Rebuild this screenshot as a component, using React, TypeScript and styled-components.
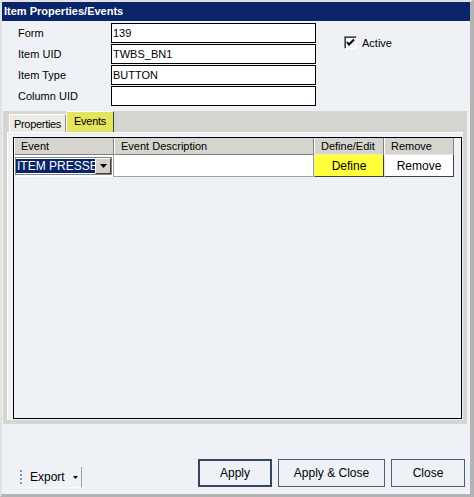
import React from 'react';
import styled, { createGlobalStyle } from 'styled-components';

const GlobalStyle = createGlobalStyle`
  html, body {
    margin: 0;
    padding: 0;
    background: #ffffff;
  }
  body {
    font-family: "Liberation Sans", Arial, sans-serif;
    font-size: 11px;
    color: #000;
  }
  * {
    box-sizing: border-box;
  }
`;

const fields = [
  { label: 'Form', value: '139' },
  { label: 'Item UID', value: 'TWBS_BN1' },
  { label: 'Item Type', value: 'BUTTON' },
  { label: 'Column UID', value: '' },
];

function App() {
  return (
    <>
      <GlobalStyle />
      <Window>
        <TitleBar>Item Properties/Events</TitleBar>
        <Header>
          <Fields>
            {fields.map((f) => (
              <React.Fragment key={f.label}>
                <Label>{f.label}</Label>
                <TextBox>{f.value}</TextBox>
              </React.Fragment>
            ))}
          </Fields>
          <ActiveOption>
            <CheckBox>
              <svg width="9" height="9" viewBox="0 0 9 9">
                <path d="M1 4 L3 6.5 L8 1.5" stroke="#000" strokeWidth="2" fill="none" />
              </svg>
            </CheckBox>
            Active
          </ActiveOption>
        </Header>

        <TabControl>
          <TabStrip>
            <Tab $width={57}>Properties</Tab>
            <Tab $active $width={48}>Events</Tab>
          </TabStrip>
          <TabPage>
            <Grid>
              <GridRow $header>
                <HeaderCell>Event</HeaderCell>
                <HeaderCell>Event Description</HeaderCell>
                <HeaderCell>Define/Edit</HeaderCell>
                <HeaderCell>Remove</HeaderCell>
              </GridRow>
              <GridRow>
                <ComboCell>
                  <Combo>
                    <ComboText>
                      <span>ITEM PRESSED</span>
                    </ComboText>
                    <ComboButton>
                      <svg width="7" height="4" viewBox="0 0 7 4">
                        <path d="M0 0 H7 L3.5 4 Z" fill="#000" />
                      </svg>
                    </ComboButton>
                  </Combo>
                </ComboCell>
                <TextCell />
                <CellButton $highlight>Define</CellButton>
                <CellButton>Remove</CellButton>
              </GridRow>
            </Grid>
          </TabPage>
        </TabControl>

        <Footer>
          <ExportMenu>
            <Grip>
              <span />
              <span />
              <span />
              <span />
            </Grip>
            <ExportLabel>Export</ExportLabel>
            <svg width="5" height="3" viewBox="0 0 5 3">
              <path d="M0 0 H5 L2.5 3 Z" fill="#000" />
            </svg>
          </ExportMenu>
          <Buttons>
            <Button $default $width={74}>Apply</Button>
            <Button $width={107}>Apply &amp; Close</Button>
            <Button $width={74}>Close</Button>
          </Buttons>
        </Footer>
      </Window>
    </>
  );
}

const Window = styled.div`
  width: 474px;
  height: 497px;
  display: flex;
  flex-direction: column;
  background: #eef2f6;
  border-top: 2px solid #e2e2e2;
  border-left: 2px solid #e2e2e2;
  border-right: 4px solid #b4b4b4;
  border-bottom: 3px solid #b4b4b4;
`;

const TitleBar = styled.div`
  height: 19px;
  line-height: 19px;
  padding-left: 2px;
  background: #0a246a;
  color: #ffffff;
  font-weight: bold;
  font-size: 11px;
`;

const Header = styled.div`
  display: flex;
  padding: 2px 0 0 16px;
`;

const Fields = styled.div`
  display: grid;
  grid-template-columns: 93px 205px;
  grid-auto-rows: 20px;
  row-gap: 1px;
`;

const Label = styled.div`
  align-self: center;
`;

const TextBox = styled.div`
  border: 1px solid #000;
  background: #ffffff;
  padding: 2px 1px 0;
  line-height: 15px;
`;

const ActiveOption = styled.div`
  display: flex;
  align-items: center;
  gap: 5px;
  height: 13px;
  margin: 13px 0 0 28px;
`;

const CheckBox = styled.div`
  width: 13px;
  height: 13px;
  display: flex;
  align-items: center;
  justify-content: center;
  background: #f4f4f4;
  border: 1px solid;
  border-color: #808080 #ffffff #ffffff #808080;
  box-shadow: inset 1px 1px 0 #404040;
`;

const TabControl = styled.div`
  flex: 1;
  display: flex;
  flex-direction: column;
  margin: 5px 3px 0 1px;
  padding: 0 4px 4px 4px;
  background: #d6d6d0;
`;

const TabStrip = styled.div`
  height: 21px;
  display: flex;
  align-items: flex-end;
  padding-left: 2px;
`;

const Tab = styled.div<{ $active?: boolean; $width: number }>`
  width: ${(p) => p.$width}px;
  height: ${(p) => (p.$active ? 21 : 18)}px;
  padding-top: 2px;
  text-align: center;
  line-height: 15px;
  letter-spacing: -0.3px;
  white-space: nowrap;
  background: ${(p) => (p.$active ? '#e4e45e' : '#eceae6')};
  border-top: 1px solid #ffffff;
  border-left: 1px solid #ffffff;
  border-right: 1px solid ${(p) => (p.$active ? '#404040' : '#909090')};
`;

const TabPage = styled.div`
  flex: 1;
  display: flex;
  padding: 4px 1px 1px 5px;
  background: #eef2f6;
  border-top: 1px solid #ffffff;
  border-left: 1px solid #ffffff;
`;

const Grid = styled.div`
  flex: 1;
  border: 1px solid #000;
  background: #eef2f6;
`;

const GridRow = styled.div<{ $header?: boolean }>`
  display: grid;
  grid-template-columns: 100px 200px 70px 70px;
  height: ${(p) => (p.$header ? 17 : 22)}px;
`;

const HeaderCell = styled.div`
  padding-left: 6px;
  line-height: 16px;
  background: #d6d4ce;
  border-left: 1px solid #ffffff;
  border-right: 1px solid #808080;
  border-bottom: 1px solid #808080;
`;

const ComboCell = styled.div`
  padding: 2px 1px 1px 1px;
  background: #ffffff;
  border-right: 1px solid #a0a0a0;
`;

const Combo = styled.div`
  height: 18px;
  display: flex;
  border: 1px solid #808080;
  background: #ffffff;
`;

/* the selected value is wider than the cell, so the box clips it */
const ComboText = styled.div`
  flex: 1;
  overflow: hidden;
  padding-left: 1px;
  margin: 1px 0;
  line-height: 14px;
  font-size: 12px;
  background: #0a246a;
  color: #ffffff;

  span {
    display: block;
    width: 84px;
    white-space: nowrap;
  }
`;

const ComboButton = styled.div`
  width: 16px;
  display: flex;
  align-items: center;
  justify-content: center;
  background: #d4d0c8;
  border: 1px solid;
  border-color: #ffffff #404040 #404040 #ffffff;
`;

const TextCell = styled.div`
  background: #ffffff;
  border-right: 1px solid #a0a0a0;
  border-bottom: 1px solid #a0a0a0;
`;

const CellButton = styled.div<{ $highlight?: boolean }>`
  display: flex;
  align-items: center;
  justify-content: center;
  margin-top: -1px;
  background: ${(p) => (p.$highlight ? '#ffff3c' : '#ffffff')};
  border: 1px solid;
  border-color: ${(p) => (p.$highlight ? '#f0f0a0' : '#e8e8e8')} #404040 #404040
    ${(p) => (p.$highlight ? '#f0f0a0' : '#e8e8e8')};
  font-size: 12px;
`;

const Footer = styled.div`
  height: 70px;
  display: flex;
  align-items: flex-end;
  justify-content: space-between;
  padding: 0 5px 7px 17px;
`;

const ExportMenu = styled.div`
  width: 63px;
  height: 21px;
  margin-bottom: -1px;
  display: flex;
  align-items: center;
  padding-left: 1px;
  border-right: 1px solid #a0a0a0;
  border-bottom: 1px solid #f8f8f8;
`;

const Grip = styled.div`
  display: flex;
  flex-direction: column;
  gap: 2px;

  span {
    width: 2px;
    height: 2px;
    background: #8a96a4;
  }
`;

const ExportLabel = styled.span`
  margin: 0 8px 0 8px;
  font-size: 12px;
`;

const Buttons = styled.div`
  display: flex;
  gap: 6px;
`;

const Button = styled.div<{ $default?: boolean; $width: number }>`
  width: ${(p) => p.$width}px;
  height: 28px;
  display: flex;
  align-items: center;
  justify-content: center;
  font-size: 12px;
  background: #eef2f6;
  border: ${(p) => (p.$default ? '2px solid #34455a' : '1px solid #4e6072')};
`;

export default App;
